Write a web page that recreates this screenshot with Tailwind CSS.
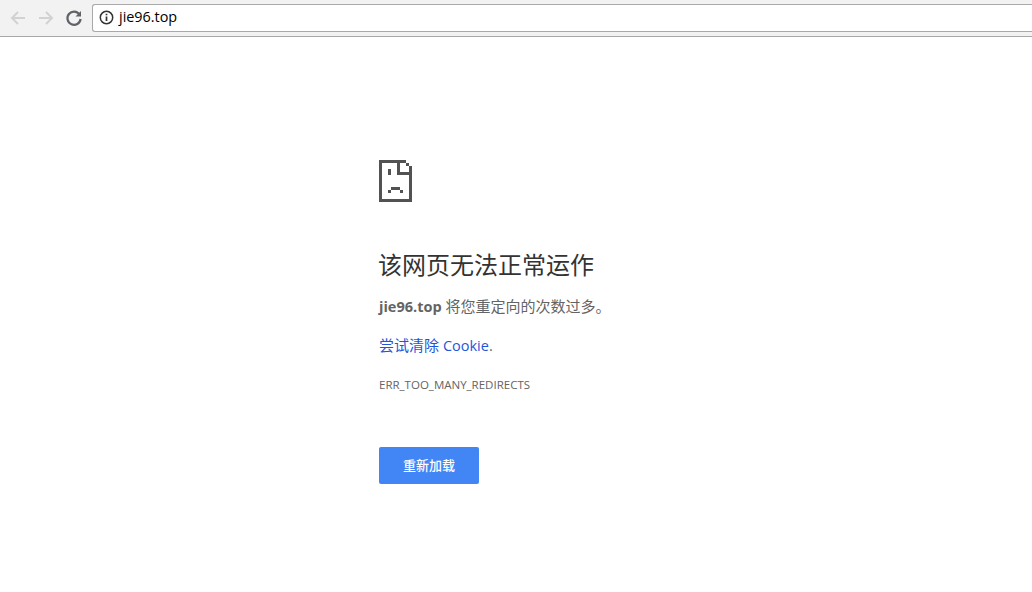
<!DOCTYPE html>
<html lang="zh-CN"><head><meta charset="utf-8"><title>jie96.top</title>
<script src="https://cdn.jsdelivr.net/npm/@tailwindcss/browser@4"></script></head>
<body class="bg-white overflow-hidden h-[592px] font-['Open_Sans','Noto_Sans_CJK_SC',sans-serif]">
<header class="h-[37px] bg-[#f2f2f2] border-b border-[#a8a8a8] flex items-start">
  <div class="w-[92px] h-full flex items-center shrink-0">
    <svg class="ml-[9px]" width="18" height="18" viewBox="0 0 18 18" fill="none" stroke="#d2d2d2" stroke-width="2"><path d="M16 9H3M9 3L3 9l6 6"/></svg>
    <svg class="ml-[10px]" width="18" height="18" viewBox="0 0 18 18" fill="none" stroke="#d2d2d2" stroke-width="2"><path d="M2 9h13M9 3l6 6-6 6"/></svg>
    <svg class="ml-[10px]" width="18" height="18" viewBox="0 0 18 18" fill="none" stroke="#5f6368" stroke-width="2.200"><path d="M14.500 5.500A6.600 6.600 0 1 0 15.600 10"/><path d="M16 2v5.500h-5.500z" fill="#5f6368" stroke="none"/></svg>
  </div>
  <div class="mt-[4px] h-[28px] flex-1 bg-white border border-r-0 border-[#a9a9a9] rounded-l-[3px] flex items-center pl-[6px]">
    <svg class="-mt-px" width="15" height="15" viewBox="0 0 15 15" fill="none" stroke="#333"><circle cx="7.500" cy="7.500" r="6.200" stroke-width="1.500"/><path d="M7.500 6.500v4.500M7.500 3.800v1.500" stroke-width="1.700"/></svg>
    <span class="ml-[5px] -mt-[2px] text-[14.400px] text-black font-['Open_Sans',sans-serif]">jie96.top</span>
  </div>
</header>
<main class="pl-[379px] pt-[123px]">
  <svg class="block" width="33" height="42" viewBox="0 0 11 14" shape-rendering="crispEdges" fill="#525252"><path d="M0 0h9v1H0zM0 0h1v14H0zM0 13h11v1H0zM10 2h1v12h-1zM9 1h1v1H9zM6 0h1v5H6zM6 4h5v1H6zM3 3h1v2H3zM4 9h3v1H4zM3 10h1v1H3zM7 10h1v1H7z"/></svg>
  <h1 class="mt-[47px] -ml-px text-[24px] leading-[32px] font-normal text-[#333]">该网页无法正常运作</h1>
  <p class="mt-[13px] text-[15px] leading-[24px] text-[#646464]"><b class="font-bold text-[14.500px]">jie96.top</b> 将您重定向的次数过多。</p>
  <p class="mt-[14px] text-[15px] leading-[24px] text-[#646464]"><a class="text-[#1f56d8]">尝试清除 <span class="text-[14.500px]">Cookie</span></a><span class="text-[14.500px]">.</span></p>
  <p class="mt-[19px] text-[11.500px] leading-[16px] text-[#646464]">ERR_TOO_MANY_REDIRECTS</p>
  <button class="block mt-[54px] w-[100px] h-[37px] bg-[#4285f4] rounded-[2px] text-white text-[13px] font-medium">重新加载</button>
</main>
</body></html>
